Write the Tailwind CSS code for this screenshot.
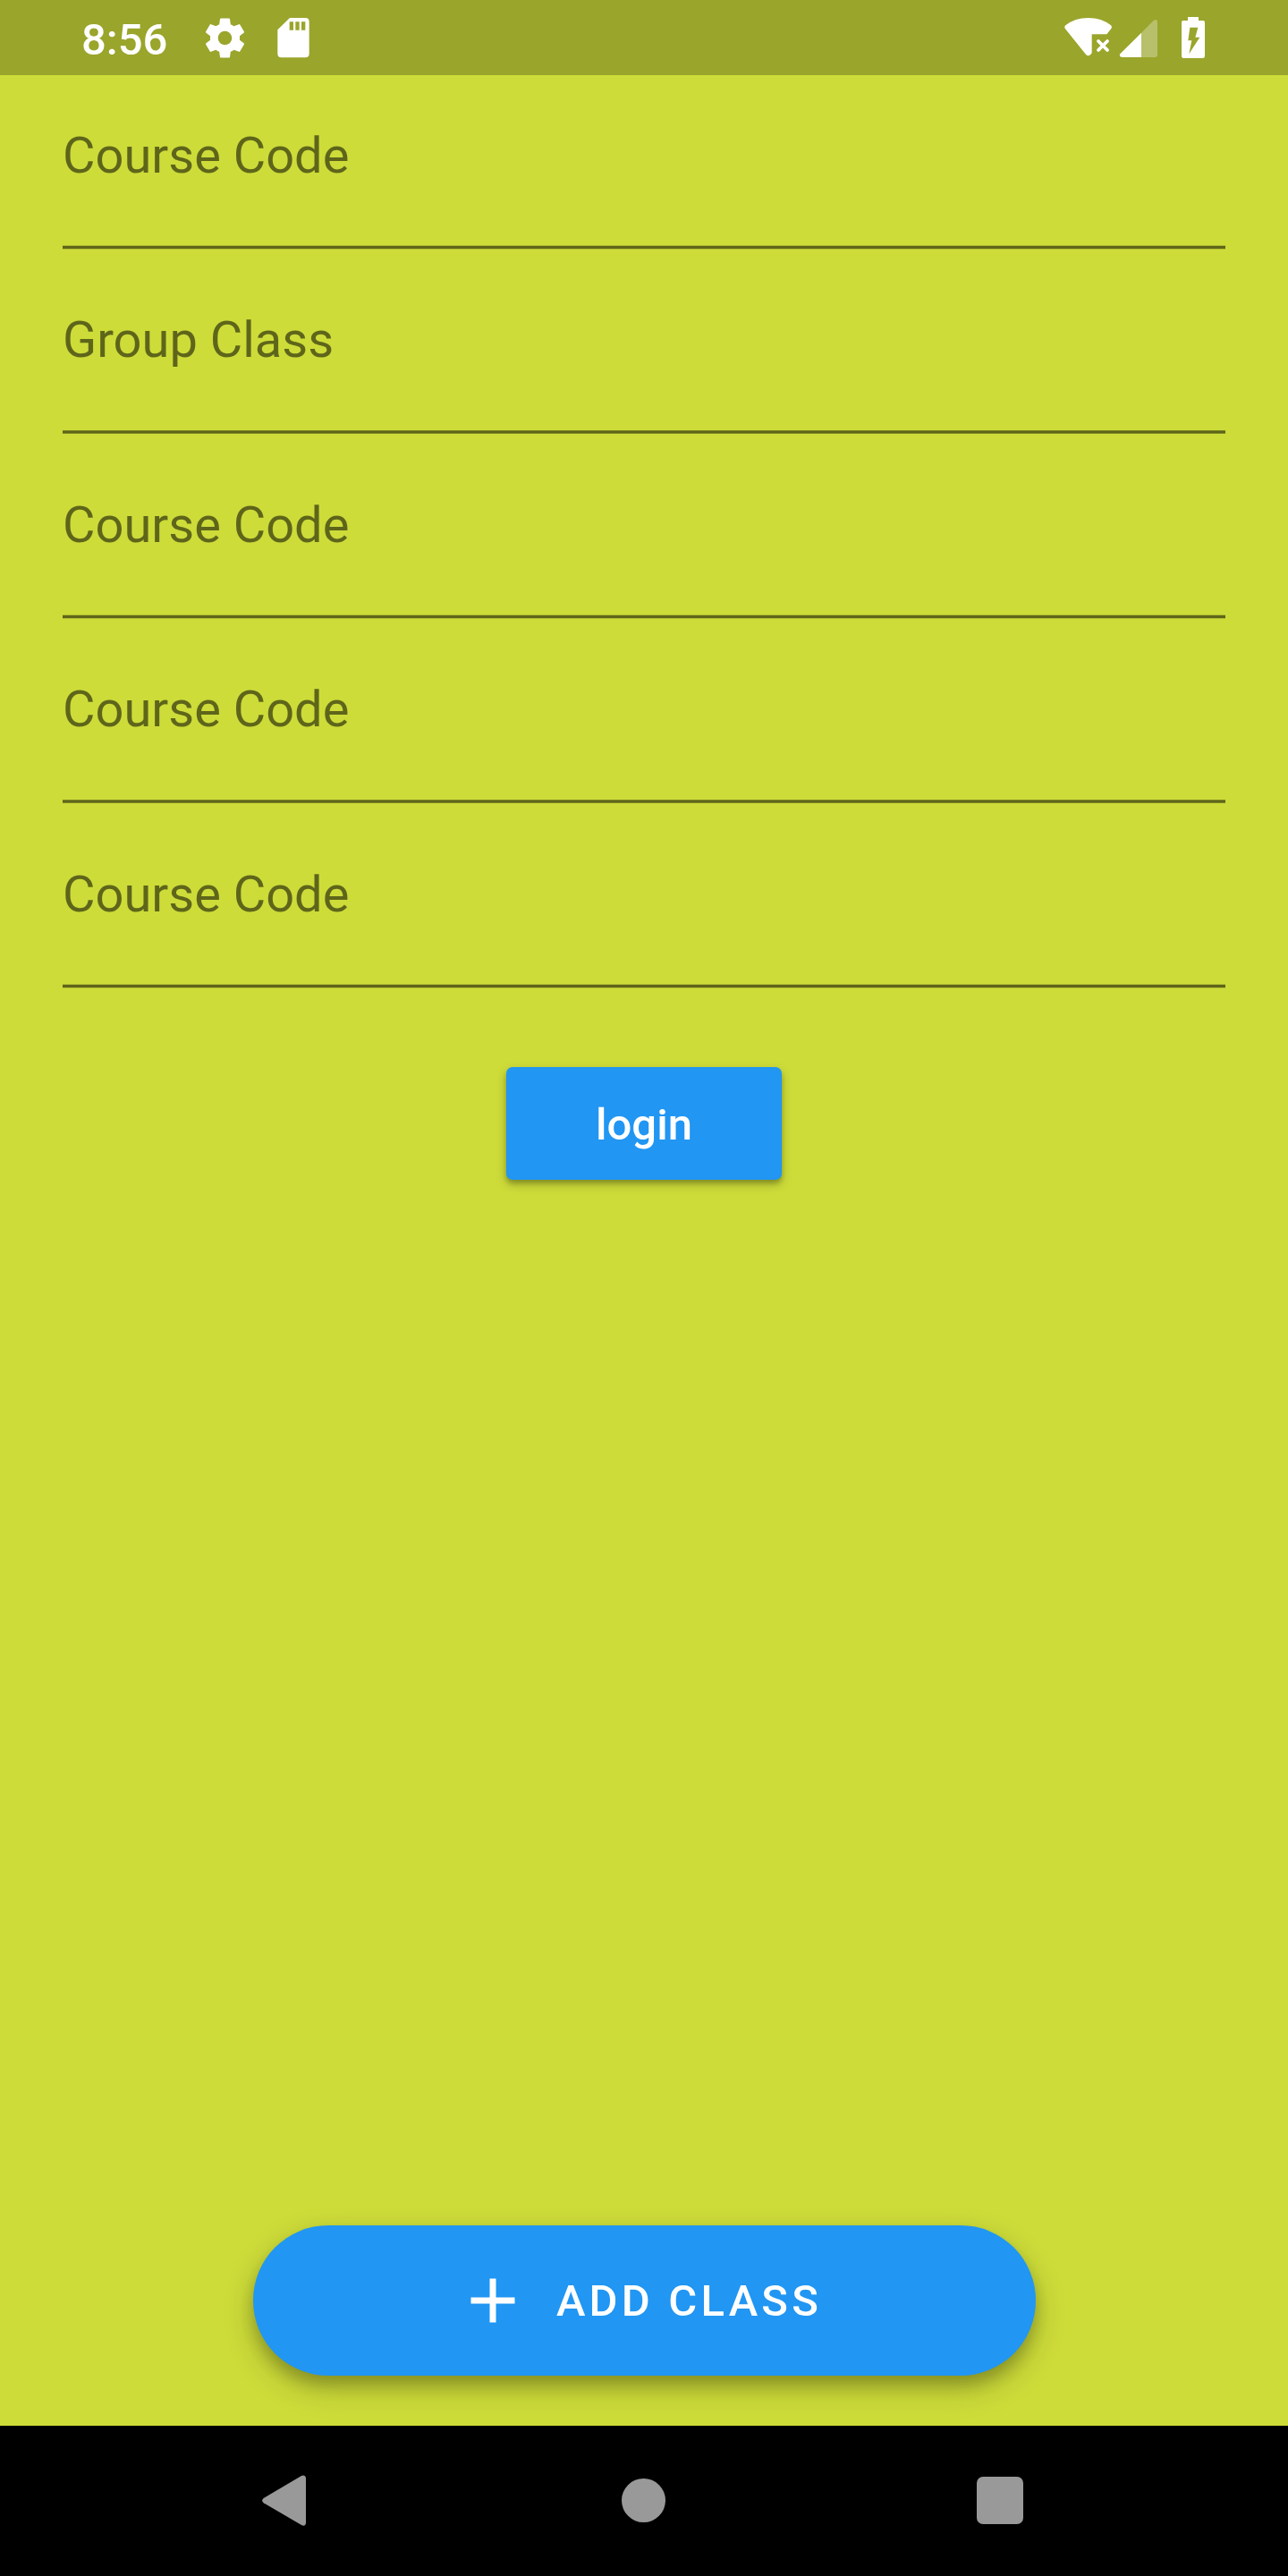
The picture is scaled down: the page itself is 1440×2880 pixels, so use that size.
<!DOCTYPE html>
<html lang="en">
<head>
<meta charset="utf-8">
<title>Add class</title>
<script src="https://cdn.jsdelivr.net/npm/@tailwindcss/browser@4"></script>
</head>
<body class="bg-[#cddc39]">
<div class="flex h-[2880px] w-[1440px] flex-col overflow-hidden bg-[#cddc39] font-['Roboto',sans-serif]">
  <!-- Status bar -->
  <header class="flex h-[84px] shrink-0 items-start justify-between bg-[#9aa52b] pr-[92px] pl-[91px] text-white">
    <div class="flex items-start">
      <span class="w-[134px] pt-[15px] text-[49px] leading-[60px] font-medium whitespace-nowrap">8:56</span>
      <svg class="mt-[16px] h-[53px] w-[53px]" viewBox="0 0 24 24" fill="currentColor"><path d="M19.43 12.98c.04-.32.07-.64.07-.98s-.03-.66-.07-.98l2.11-1.65c.19-.15.24-.42.12-.64l-2-3.46c-.12-.22-.39-.3-.61-.22l-2.49 1c-.52-.4-1.08-.73-1.69-.98l-.38-2.65C14.46 2.18 14.25 2 14 2h-4c-.25 0-.46.18-.49.42l-.38 2.65c-.61.25-1.17.59-1.69.98l-2.49-1c-.23-.09-.49 0-.61.22l-2 3.46c-.13.22-.07.49.12.64l2.11 1.65c-.04.32-.07.65-.07.98s.03.66.07.98l-2.11 1.65c-.19.15-.24.42-.12.64l2 3.46c.12.22.39.3.61.22l2.49-1c.52.4 1.08.73 1.69.98l.38 2.65c.03.24.24.42.49.42h4c.25 0 .46-.18.49-.42l.38-2.65c.61-.25 1.17-.59 1.69-.98l2.49 1c.23.09.49 0 .61-.22l2-3.46c.12-.22.07-.49-.12-.64l-2.11-1.65zM12 15.5c-1.93 0-3.5-1.57-3.5-3.5s1.57-3.5 3.5-3.5 3.5 1.57 3.5 3.5-1.57 3.5-3.5 3.5z"/></svg>
      <svg class="mt-[20px] ml-[32px] h-[45px] w-[37px]" viewBox="0 0 111 135" fill="currentColor" fill-rule="evenodd"><path d="M42 0H94q13 0 13 13V120q0 13-13 13H14Q1 133 1 120V40zM41 13V41H54V13zM61 13V41H74V13zM81 13V41H94V13z"/></svg>
    </div>
    <div class="flex items-start">
      <svg class="mt-[19px] h-[45px] w-[54px]" viewBox="90 57 162 135" fill="currentColor"><path d="M93 97Q88 90 94 85Q125 60 170 60T246 85Q251 90 247 96L232 115H182V178L177 184Q170 190 163 184z"/><path d="M204 138L234 168M234 138L204 168" fill="none" stroke="currentColor" stroke-width="11.5" stroke-linecap="round"/></svg>
      <svg class="mt-[21px] ml-[7px] h-[44px] w-[44px]" viewBox="273 63 132 132" fill="currentColor"><path class="opacity-30" d="M348 110L389 69Q402 61 402 74V184Q402 192 394 192H348z"/><path d="M348 110V192H283Q272 191 277 181z"/></svg>
      <svg class="mt-[19px] ml-[25px] h-[46px] w-[28px]" viewBox="480 57 84 138" fill="currentColor" fill-rule="evenodd"><path d="M504 57H540V69H555Q561 69 561 75V188Q561 195 554 195H490Q483 195 483 188V75Q483 69 489 69H504zM511 92L505 136H517L508 181L544 125H529L538 92z"/></svg>
    </div>
  </header>

  <main class="flex flex-1 flex-col items-center px-[70px]">
    <form class="flex w-full flex-col text-[56px] leading-[66px] text-black/54">
      <label class="flex h-[195px] flex-col justify-between pt-[57px]"><span>Course Code</span><span class="block h-[5px] border-y border-black/14 bg-black/54 bg-clip-padding"></span></label>
      <label class="flex h-[206px] flex-col justify-between pt-[68px]"><span>Group Class</span><span class="block h-[4px] border-y border-black/40 bg-black/54 bg-clip-padding"></span></label>
      <label class="flex h-[207px] flex-col justify-between pt-[69px]"><span>Course Code</span><span class="block h-[5px] border-y border-black/14 bg-black/54 bg-clip-padding"></span></label>
      <label class="flex h-[206px] flex-col justify-between pt-[68px]"><span>Course Code</span><span class="block h-[4px] border-y border-black/40 bg-black/54 bg-clip-padding"></span></label>
      <label class="flex h-[207px] flex-col justify-between pt-[69px]"><span>Course Code</span><span class="block h-[5px] border-y border-black/14 bg-black/54 bg-clip-padding"></span></label>
    </form>
    <button class="mt-[88px] h-[126px] w-[308px] rounded-[7px] bg-[#2196f3] pt-[3px] text-[49px] leading-[58px] font-medium text-white shadow-[0_4px_5px_rgba(0,0,0,0.2),0_5px_12px_rgba(0,0,0,0.22)]">login</button>
    <button class="mt-auto mb-[56px] flex h-[168px] w-[875px] items-center justify-center rounded-full bg-[#2196f3] pr-[12px] text-white shadow-[0_10px_16px_rgba(0,0,0,0.18),0_14px_34px_rgba(0,0,0,0.22)]">
      <svg class="h-[84px] w-[84px]" viewBox="0 0 24 24" fill="currentColor"><path d="M19 13h-6v6h-2v-6H5v-2h6V5h2v6h6v2z"/></svg>
      <span class="ml-[29px] pt-[2px] text-[49px] leading-[58px] font-medium tracking-[4.2px]">ADD CLASS</span>
    </button>
  </main>

  <!-- Navigation bar -->
  <nav class="flex h-[168px] shrink-0 items-center bg-black pb-[1px] pl-[293px] text-[#999]">
    <svg class="h-[57px] w-[49px]" viewBox="69 82 147 171" fill="currentColor"><path d="M74 160L201 85Q214 80 216 92V243Q214 256 201 250L74 176Q65 168 74 160z"/></svg>
    <span class="ml-[353px] h-[49px] w-[49px] rounded-full bg-[#999]"></span>
    <span class="ml-[347.7px] h-[52.5px] w-[52.5px] rounded-[7px] bg-[#999]"></span>
  </nav>
</div>
</body>
</html>
